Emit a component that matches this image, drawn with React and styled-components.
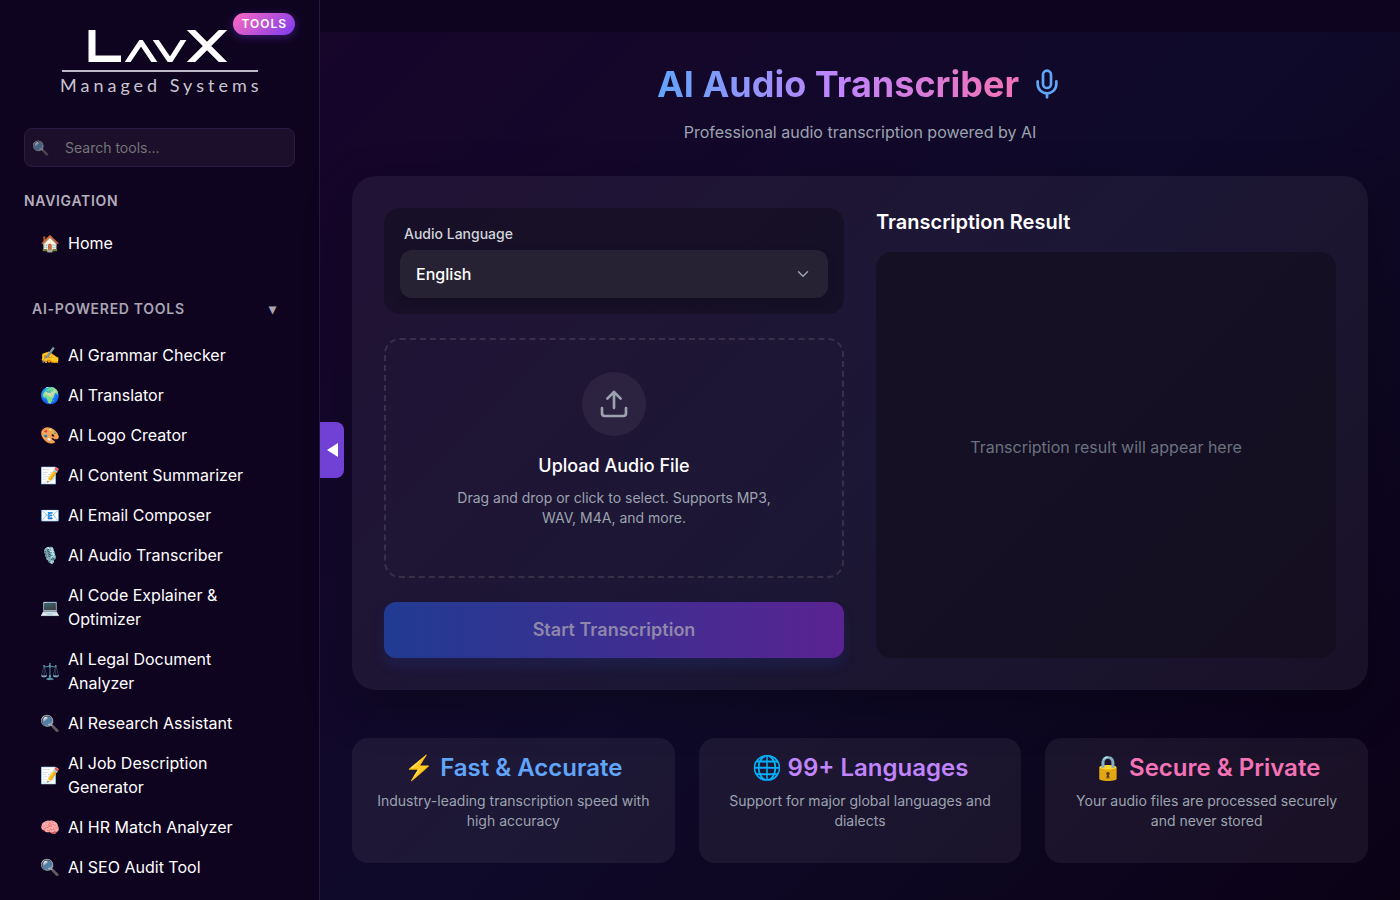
import React from "react";
import styled, { createGlobalStyle } from "styled-components";
import { ChevronDown, Mic } from "lucide-react";

const GlobalStyle = createGlobalStyle`
  *, *::before, *::after { box-sizing: border-box; }
  html, body, #root { height: 100%; }
  body {
    margin: 0;
    overflow: hidden;
    background: #0f0420;
    color: #fff;
    font-family: Inter, "Liberation Sans", sans-serif;
    font-size: 16px;
    line-height: 24px;
  }
  h1, h2, h3, p, ul { margin: 0; padding: 0; }
  ul { list-style: none; }
  button, input, select { font: inherit; color: inherit; }
`;

const Shell = styled.div`
  display: flex;
  height: 100vh;
`;

const Sidebar = styled.aside`
  flex: 0 0 320px;
  padding: 16px 24px 0;
  overflow: hidden;
  background: #0f0420;
  border-right: 1px solid #241a42;
`;

const Brand = styled.a`
  position: relative;
  display: block;
  height: 96px;
  text-decoration: none;

  svg { display: block; margin: 0 auto; }
`;

const BrandBadge = styled.span`
  position: absolute;
  top: -3px;
  right: 0;
  padding: 0 8px;
  border-radius: 12px;
  background: linear-gradient(135deg, #ff6ac1, #7c3aed);
  box-shadow: 0 2px 8px rgba(124, 58, 237, 0.4);
  color: #fff;
  font-size: 12px;
  font-weight: 600;
  line-height: 22px;
  letter-spacing: 1px;
`;

const SearchBox = styled.label`
  display: flex;
  align-items: center;
  gap: 16px;
  height: 39px;
  margin-top: 16px;
  padding: 0 7px;
  border: 1px solid #2a1c48;
  border-radius: 8px;
  background: #1b0f2b;
  font-size: 14px;

  span { opacity: 0.7; }
  input {
    flex: 1;
    min-width: 0;
    padding: 0;
    border: 0;
    outline: 0;
    background: none;
  }
  input::placeholder { color: #757575; opacity: 1; }
`;

const NavHeading = styled.h2`
  margin-top: 24px;
  color: #b4aebc;
  font-size: 14px;
  font-weight: 600;
  line-height: 20px;
  letter-spacing: 0.05em;
`;

const GroupToggle = styled.button`
  display: flex;
  justify-content: space-between;
  align-items: center;
  width: 100%;
  margin: 28px 0 8px;
  padding: 8px 18px 8px 8px;
  border: 0;
  background: none;
  color: #aaa4b3;
  font-size: 14px;
  font-weight: 600;
  line-height: 20px;
  letter-spacing: 0.05em;
`;

const NavList = styled.ul`
  padding: ${(p) => (p.$inset ? "0 8px" : "12px 8px 0")};
`;

const NavLink = styled.a`
  display: flex;
  align-items: center;
  gap: 8px;
  padding: 8px;
  color: #fff;
  text-decoration: none;

  span:first-child { flex: 0 0 20px; white-space: nowrap; }
`;

const Main = styled.main`
  position: relative;
  flex: 1;
  min-width: 0;
  padding-top: 32px;
`;

const CollapseButton = styled.button`
  position: absolute;
  top: 50%;
  left: 0;
  z-index: 1;
  display: grid;
  place-items: center;
  width: 24px;
  height: 56px;
  margin-top: -28px;
  padding: 0;
  border: 0;
  border-radius: 0 8px 8px 0;
  background: #7140d4;
`;

const Page = styled.div`
  min-height: 100%;
  padding: 32px;
  background: linear-gradient(135deg, #17052a 0%, #0f0a2a 50%, #0b0216 100%);
`;

const Header = styled.header`
  text-align: center;
`;

const TitleRow = styled.div`
  display: flex;
  justify-content: center;
  align-items: center;
  gap: 12px;
`;

const Title = styled.h1`
  font-size: 36px;
  font-weight: 700;
  line-height: 40px;
  color: transparent;
  background: linear-gradient(to right, #60a5fa, #c084fc, #f472b6);
  background-clip: text;
`;

const Subtitle = styled.p`
  margin-top: 16px;
  color: #9ca3af;
`;

const Workspace = styled.section`
  display: grid;
  grid-template-columns: 1fr 1fr;
  gap: 32px;
  margin-top: 32px;
  padding: 32px;
  border-radius: 24px;
  background: rgba(255, 255, 255, 0.055);
  box-shadow: 0 16px 48px rgba(0, 0, 0, 0.25);
`;

const Column = styled.div`
  display: flex;
  flex-direction: column;
  gap: ${(p) => p.$gap};
`;

const LanguageField = styled.div`
  padding: 16px;
  border-radius: 16px;
  background: rgba(16, 12, 28, 0.55);

  label {
    display: block;
    margin-bottom: 6px;
    padding-left: 4px;
    color: #d1d5db;
    font-size: 14px;
    font-weight: 500;
    line-height: 20px;
  }
`;

const SelectWrap = styled.div`
  display: grid;
  align-items: center;
  border-radius: 12px;
  background: #272233;
  box-shadow: 0 4px 8px rgba(0, 0, 0, 0.15);

  select, svg { grid-area: 1 / 1; }
  select {
    width: 100%;
    height: 48px;
    padding: 0 16px;
    border: 0;
    appearance: none;
    background: none;
    font-weight: 500;
  }
  svg {
    justify-self: end;
    margin-right: 16px;
    color: #9ca3af;
    pointer-events: none;
  }
`;

const DropZone = styled.button`
  display: flex;
  flex-direction: column;
  align-items: center;
  min-height: 240px;
  padding: 32px;
  border: 2px dashed #383049;
  border-radius: 16px;
  background: none;
`;

const UploadBadge = styled.span`
  display: grid;
  place-items: center;
  width: 64px;
  height: 64px;
  margin-bottom: 16px;
  border-radius: 50%;
  background: rgba(255, 255, 255, 0.06);
  color: #9ca3af;
`;

const DropTitle = styled.span`
  margin-bottom: 8px;
  font-size: 18px;
  font-weight: 500;
  line-height: 28px;
`;

const DropHint = styled.span`
  max-width: 320px;
  color: #9ca3af;
  font-size: 14px;
  line-height: 20px;
`;

const StartButton = styled.button`
  height: 56px;
  border: 0;
  border-radius: 12px;
  background: linear-gradient(to right, #203b92, #5a2391);
  box-shadow: 0 8px 12px rgba(37, 60, 160, 0.2);
  color: #8f87ab;
  font-size: 18px;
  font-weight: 600;
`;

const ResultTitle = styled.h2`
  font-size: 20px;
  font-weight: 600;
  line-height: 28px;
`;

const ResultBox = styled.div`
  flex: 1;
  display: grid;
  place-items: center;
  padding: 16px 16px 32px;
  border-radius: 16px;
  background: rgba(18, 14, 28, 0.68);
  color: #6b7280;
`;

const Features = styled.section`
  display: grid;
  grid-template-columns: repeat(3, 1fr);
  gap: 24px;
  margin-top: 48px;
`;

const FeatureCard = styled.article`
  min-height: 125px;
  padding: 15px 24px;
  border-radius: 16px;
  background: rgba(255, 255, 255, 0.06);
  text-align: center;

  h3 {
    margin-bottom: 8px;
    color: ${(p) => p.$color};
    font-size: 24px;
    font-weight: 600;
    line-height: 30px;
  }
  p {
    color: #9ca3af;
    font-size: 14px;
    line-height: 20px;
  }
`;

const tools = [
  ["✍️", "AI Grammar Checker"],
  ["🌍", "AI Translator"],
  ["🎨", "AI Logo Creator"],
  ["📝", "AI Content Summarizer"],
  ["📧", "AI Email Composer"],
  ["🎙️", "AI Audio Transcriber"],
  ["💻", "AI Code Explainer & Optimizer"],
  ["⚖️", "AI Legal Document Analyzer"],
  ["🔍", "AI Research Assistant"],
  ["📝", "AI Job Description Generator"],
  ["🧠", "AI HR Match Analyzer"],
  ["🔍", "AI SEO Audit Tool"],
];

const features = [
  ["#60a5fa", "⚡ Fast & Accurate", "Industry-leading transcription speed with high accuracy"],
  ["#c084fc", "🌐 99+ Languages", "Support for major global languages and dialects"],
  ["#f472b6", "🔒 Secure & Private", "Your audio files are processed securely and never stored"],
];

function Logo() {
  return (
    <svg width="216" height="88" viewBox="-8 0 216 88" role="img" aria-label="LavX Managed Systems">
      <defs>
        <clipPath id="logo-tall">
          <rect x="0" y="14" width="200" height="32" />
        </clipPath>
        <clipPath id="logo-short">
          <rect x="0" y="24" width="200" height="22" />
        </clipPath>
      </defs>
      <g fill="none" stroke="#fff">
        <g clipPath="url(#logo-tall)">
          <path d="M32 10v33h29" strokeWidth="7" />
          <path d="M126 9l42 42M168 9l-42 42" strokeWidth="6" />
        </g>
        <g clipPath="url(#logo-short)" strokeWidth="5">
          <path d="M65 50l16-24 16 24" />
          <path d="M93 20l17 25 16-25" />
        </g>
      </g>
      <path d="M2 55h196" stroke="#bdb8c8" strokeWidth="2" />
      <text
        x="0"
        y="76"
        fill="#c9c5d1"
        fontFamily="Lato, sans-serif"
        fontSize="18"
        letterSpacing="4"
      >
        Managed Systems
      </text>
    </svg>
  );
}

function NavItem({ icon, label }) {
  return (
    <li>
      <NavLink href="#">
        <span aria-hidden="true">{icon}</span>
        <span>{label}</span>
      </NavLink>
    </li>
  );
}

export default function App() {
  return (
    <>
      <GlobalStyle />
      <Shell>
        <Sidebar>
          <Brand href="#">
            <Logo />
            <BrandBadge>TOOLS</BrandBadge>
          </Brand>
          <SearchBox>
            <span aria-hidden="true">🔍</span>
            <input type="search" placeholder="Search tools..." aria-label="Search tools" />
          </SearchBox>
          <NavHeading>NAVIGATION</NavHeading>
          <nav>
            <NavList>
              <NavItem icon="🏠" label="Home" />
            </NavList>
            <GroupToggle type="button" aria-expanded="true">
              <span>AI-POWERED TOOLS</span>
              <span aria-hidden="true">▾</span>
            </GroupToggle>
            <NavList $inset>
              {tools.map(([icon, label]) => (
                <NavItem key={label} icon={icon} label={label} />
              ))}
            </NavList>
          </nav>
        </Sidebar>

        <Main>
          <CollapseButton type="button" aria-label="Collapse sidebar">
            <svg width="12" height="14" viewBox="0 0 12 14" aria-hidden="true">
              <path d="M12 0v14L1 7z" fill="#fff" />
            </svg>
          </CollapseButton>
          <Page>
            <Header>
              <TitleRow>
                <Title>AI Audio Transcriber</Title>
                <Mic size={32} color="#60a5fa" />
              </TitleRow>
              <Subtitle>Professional audio transcription powered by AI</Subtitle>
            </Header>

            <Workspace>
              <Column $gap="24px">
                <LanguageField>
                  <label htmlFor="language">Audio Language</label>
                  <SelectWrap>
                    <select id="language" defaultValue="en">
                      <option value="en">English</option>
                    </select>
                    <ChevronDown size={18} />
                  </SelectWrap>
                </LanguageField>
                <DropZone type="button">
                  <UploadBadge>
                    <svg
                      width="32"
                      height="32"
                      viewBox="0 0 24 24"
                      fill="none"
                      stroke="currentColor"
                      strokeWidth="2"
                      strokeLinecap="round"
                      strokeLinejoin="round"
                      aria-hidden="true"
                    >
                      <path d="M3 15v4a2 2 0 0 0 2 2h14a2 2 0 0 0 2-2v-4M7 8l5-5 5 5M12 3v12" />
                    </svg>
                  </UploadBadge>
                  <DropTitle>Upload Audio File</DropTitle>
                  <DropHint>
                    Drag and drop or click to select. Supports MP3, WAV, M4A, and more.
                  </DropHint>
                </DropZone>
                <StartButton type="button" disabled>
                  Start Transcription
                </StartButton>
              </Column>
              <Column $gap="16px">
                <ResultTitle>Transcription Result</ResultTitle>
                <ResultBox>Transcription result will appear here</ResultBox>
              </Column>
            </Workspace>

            <Features>
              {features.map(([color, title, text]) => (
                <FeatureCard key={title} $color={color}>
                  <h3>{title}</h3>
                  <p>{text}</p>
                </FeatureCard>
              ))}
            </Features>
          </Page>
        </Main>
      </Shell>
    </>
  );
}
